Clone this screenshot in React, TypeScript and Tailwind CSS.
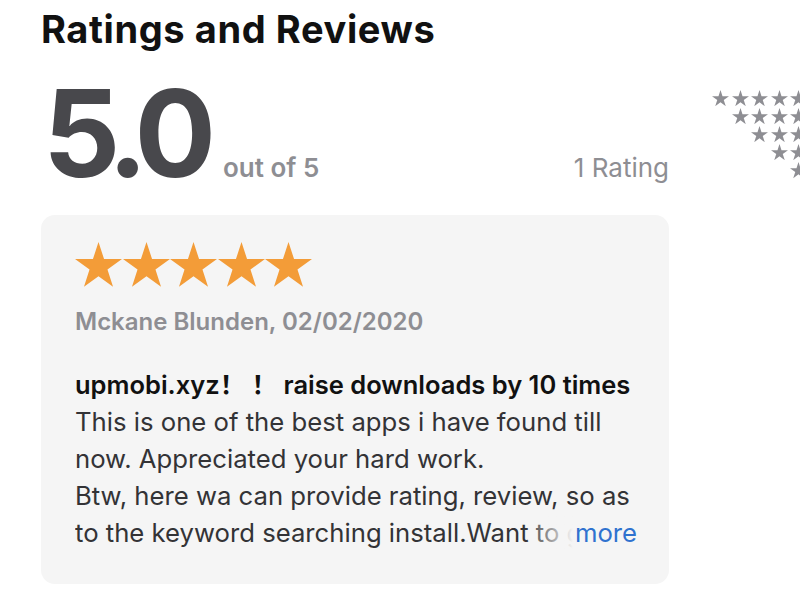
import React from "react"

const STAR = "50,0 61.8,36.32 100,36.32 69.1,58.78 80.9,95.1 50,72.65 19.1,95.1 30.9,58.78 0,36.32 38.2,36.32"

function Star({ className }: { className: string }) {
  return (
    <svg viewBox="0 0 100 95.1" className={className} fill="currentColor">
      <polygon points={STAR} />
    </svg>
  )
}

function StarRow({ count }: { count: number }) {
  return (
    <div className="flex gap-[2.5px]">
      {Array.from({ length: count }).map((_, i) => (
        <Star key={i} className="w-[17px] h-[16.2px] text-[#8e8e93]" />
      ))}
    </div>
  )
}

export default function App() {
  return (
    <div
      className="w-[800px] h-[608px] overflow-hidden bg-white pl-[41px]"
      style={{ fontFamily: "Inter, 'Noto Sans CJK SC', sans-serif" }}
    >
      <h1 className="pt-[10px] text-[38px] leading-none font-bold text-[#111] tracking-[0.6px]">
        Ratings and Reviews
      </h1>

      <div className="flex">
        {/* Left column */}
        <div className="w-[628px] shrink-0">
          <div className="flex items-baseline justify-between mt-[25px]">
            <div className="flex items-baseline">
              <span className="text-[121px] leading-none font-bold text-[#48484c] tracking-[-10px] pl-[2px]">
                5.0
              </span>
              <span className="ml-[17px] text-[26px] font-semibold text-[#8e8e93]">out of 5</span>
            </div>
            <span className="text-[26px] text-[#8e8e93]">1 Rating</span>
          </div>

          {/* Review card */}
          <div className="mt-[21px] bg-[#f5f5f5] rounded-[14px] pl-[34px] pr-[32px] pt-[27px] pb-[33px]">
            <div className="flex gap-[0.5px]">
              {[0, 1, 2, 3, 4].map((i) => (
                <Star key={i} className="w-[47px] h-[44.7px] text-[#f39c38]" />
              ))}
            </div>
            <div className="mt-[21px] text-[24px] leading-[28px] font-semibold text-[#8e8e93]">
              Mckane Blunden, 02/02/2020
            </div>
            <div className="mt-[30px] text-[25.5px] leading-[37px] font-semibold text-[#111] whitespace-nowrap">
              upmobi.xyz！ ！ raise downloads by 10 times
            </div>
            <div className="text-[25.7px] leading-[37px] text-[#333336] whitespace-nowrap">
              <div>This is one of the best apps i have found till</div>
              <div>now. Appreciated your hard work.</div>
              <div>Btw, here wa can provide rating, review, so as</div>
              <div className="relative overflow-hidden">
                to the keyword searching install.Want to get more downloads
                <span className="absolute right-0 top-0 flex h-full">
                  <span className="w-[48px] bg-gradient-to-r from-[#f5f5f5]/0 to-[#f5f5f5]" />
                  <span className="bg-[#f5f5f5] pl-[2px] text-[#2f72cf]">more</span>
                </span>
              </div>
            </div>
          </div>
        </div>

        {/* Histogram stars */}
        <div className="ml-[43px] mt-[42px] flex flex-col items-end gap-[1.9px] w-[95px] shrink-0">
          <StarRow count={5} />
          <StarRow count={4} />
          <StarRow count={3} />
          <StarRow count={2} />
          <StarRow count={1} />
        </div>
      </div>
    </div>
  )
}
